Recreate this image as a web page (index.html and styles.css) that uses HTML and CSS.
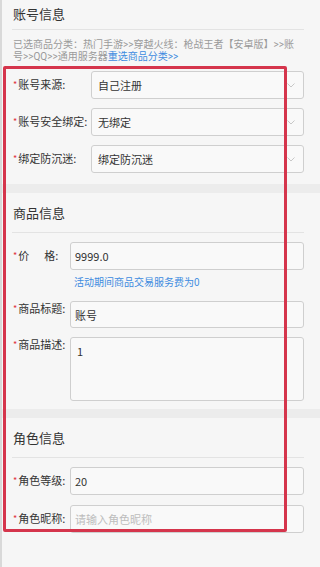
FILE: index.html
```html
<!DOCTYPE html>
<html lang="zh-CN">
<head>
    <meta charset="UTF-8">
    <meta name="viewport" content="width=device-width, initial-scale=1.0">
    <title>发布商品</title>
    <link rel="stylesheet" href="styles.css">
</head>
<body>
    <div class="page">
        <!-- 账号信息 -->
        <div class="section first">
            <div class="section-title">账号信息</div>
            <div class="category">
                <span class="line">已选商品分类：热门手游&gt;&gt;穿越火线：枪战王者【安卓版】&gt;&gt;账</span>
                <span class="line">号&gt;&gt;QQ&gt;&gt;通用服务器<a href="#">重选商品分类&gt;&gt;</a></span>
            </div>
            <div class="fields wide">
                <div class="field">
                    <label><i>*</i>账号来源:</label>
                    <div class="select">自己注册
                        <svg class="arrow" width="8" height="5" viewBox="0 0 8 5"><path d="M0.5 0.5 L4 4 L7.5 0.5" fill="none" stroke="#bbb" stroke-width="0.8"/></svg>
                    </div>
                </div>
                <div class="field">
                    <label><i>*</i>账号安全绑定:</label>
                    <div class="select">无绑定
                        <svg class="arrow" width="8" height="5" viewBox="0 0 8 5"><path d="M0.5 0.5 L4 4 L7.5 0.5" fill="none" stroke="#bbb" stroke-width="0.8"/></svg>
                    </div>
                </div>
                <div class="field">
                    <label><i>*</i>绑定防沉迷:</label>
                    <div class="select">绑定防沉迷
                        <svg class="arrow" width="8" height="5" viewBox="0 0 8 5"><path d="M0.5 0.5 L4 4 L7.5 0.5" fill="none" stroke="#bbb" stroke-width="0.8"/></svg>
                    </div>
                </div>
            </div>
        </div>

        <!-- 商品信息 -->
        <div class="section">
            <div class="section-title">商品信息</div>
            <div class="fields">
                <div class="field">
                    <label><i>*</i>价<span class="gap"></span>格:</label>
                    <input type="text" value="9999.0">
                </div>
                <div class="hint">活动期间商品交易服务费为0</div>
                <div class="field top">
                    <label><i>*</i>商品标题:</label>
                    <input type="text" class="short" value="账号">
                </div>
                <div class="field top">
                    <label><i>*</i>商品描述:</label>
                    <textarea>1</textarea>
                </div>
            </div>
        </div>

        <!-- 角色信息 -->
        <div class="section">
            <div class="section-title">角色信息</div>
            <div class="fields">
                <div class="field">
                    <label><i>*</i>角色等级:</label>
                    <input type="text" value="20">
                </div>
                <div class="field">
                    <label><i>*</i>角色昵称:</label>
                    <input type="text" placeholder="请输入角色昵称">
                </div>
            </div>
        </div>

        <!-- 标注框 -->
        <div class="mark"></div>
    </div>
</body>
</html>
```

FILE: styles.css
```css
body {
    margin: 0;
    background-color: #f6f6f6;
    font-family: "Noto Sans CJK SC", "Noto Sans", sans-serif;
    color: #333;
}
.page {
    position: relative;
    min-height: 567px;
    border-left: 2px solid #d9d9d9;
    box-sizing: border-box;
    overflow: hidden;
}
.section {
    padding: 0 16px 8px 10px;
    border-top: 9px solid #ececec;
}
.section.first {
    border-top: none;
    padding-bottom: 11px;
}
.section-title {
    font-size: 13px;
    line-height: 28px;
    padding: 6px 0 5px 1px;
    border-bottom: 1px solid #e3e3e3;
}
.first .section-title {
    padding-top: 0;
    padding-bottom: 1px;
}
.category {
    margin: 9px 0 7px 1px;
    font-family: Roboto, "Noto Sans CJK SC", sans-serif;
    font-size: 10px;
    line-height: 12px;
    color: #9a9a9a;
}
.category .line {
    display: block;
    white-space: nowrap;
}
.category a {
    color: #3d8be0;
    text-decoration: none;
}
.fields {
    display: flex;
    flex-direction: column;
    gap: 9px;
    padding-top: 8px;
}
.first .fields {
    padding-top: 0;
    gap: 8px;
}
.field {
    display: flex;
    align-items: center;
}
.field.top {
    align-items: flex-start;
}
.field.top label {
    line-height: 14px;
}
label {
    width: 58px;
    flex-shrink: 0;
    font-size: 11px;
    line-height: 28px;
    white-space: nowrap;
}
.wide label {
    width: 79px;
}
label i {
    font-style: normal;
    color: #e0323c;
    font-size: 9px;
    margin: 0 1px 0 1px;
    vertical-align: 1px;
}
.gap {
    display: inline-block;
    width: 15px;
}
.select, input, textarea {
    flex: 1;
    box-sizing: border-box;
    height: 28px;
    padding: 0 6px;
    border: 1px solid #cfcfcf;
    border-radius: 3px;
    background-color: #f9f9f9;
    font-family: "Noto Sans CJK SC", "Noto Sans", sans-serif;
    font-size: 11px;
    color: #333;
    outline: none;
}
input {
    padding-left: 4px;
}
input::placeholder {
    color: #bdbdbd;
}
.select {
    position: relative;
    line-height: 26px;
}
.arrow {
    position: absolute;
    right: 8px;
    top: 11px;
}
input.short {
    height: 27px;
}
textarea {
    height: 64px;
    padding: 6px 6px;
    line-height: 14px;
    resize: none;
}
.hint {
    margin: -4px 0 3px 62px;
    font-size: 10px;
    line-height: 14px;
    color: #3d8be0;
}
.mark {
    position: absolute;
    left: 1px;
    top: 66px;
    width: 284px;
    height: 466px;
    box-sizing: border-box;
    border: 3px solid #d5354c;
    border-radius: 2px;
}
```
